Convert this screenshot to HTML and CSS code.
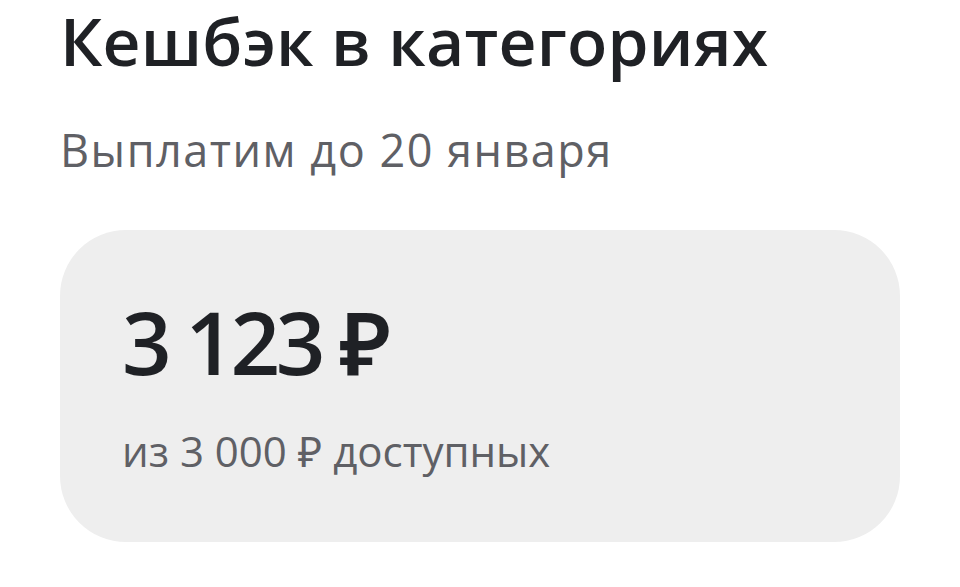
FILE: index.html
```html
<!DOCTYPE html>
<html>
  <head>
    <title>Кешбэк в категориях</title>
    <link rel="stylesheet" href="styles.css">
  </head>
  <body>
    <div class="cashback">
      <h1 class="cashback__title">Кешбэк в категориях</h1>
      <p class="cashback__note">Выплатим до 20 января</p>
      <div class="cashback__card">
        <div class="cashback__sum">3 123 ₽</div>
        <div class="cashback__limit">из 3 000 ₽ доступных</div>
      </div>
    </div>
  </body>
</html>
```
FILE: styles.css
```css
* {
  margin: 0;
  padding: 0;
  box-sizing: border-box;
}

body {
  background: #ffffff;
  font-family: 'Open Sans', 'Noto Sans', sans-serif;
  color: #1f2125;
}

.cashback {
  width: 840px;
  margin-left: 60px;
}

.cashback__title {
  font-size: 66px;
  font-weight: 600;
  line-height: 80px;
  letter-spacing: 0.2px;
}

.cashback__note {
  margin-top: 42px;
  font-size: 45px;
  line-height: 56px;
  letter-spacing: 1.5px;
  color: #5f6065;
}

.cashback__card {
  margin-top: 52px;
  height: 312px;
  padding: 66px 62px 0;
  border-radius: 66px;
  background: #eeeeee;
}

.cashback__sum {
  font-size: 87px;
  font-weight: 600;
  line-height: 90px;
  letter-spacing: -4.5px;
}

.cashback__limit {
  margin-top: 37px;
  font-size: 42px;
  line-height: 56px;
  color: #5f6065;
}
```
